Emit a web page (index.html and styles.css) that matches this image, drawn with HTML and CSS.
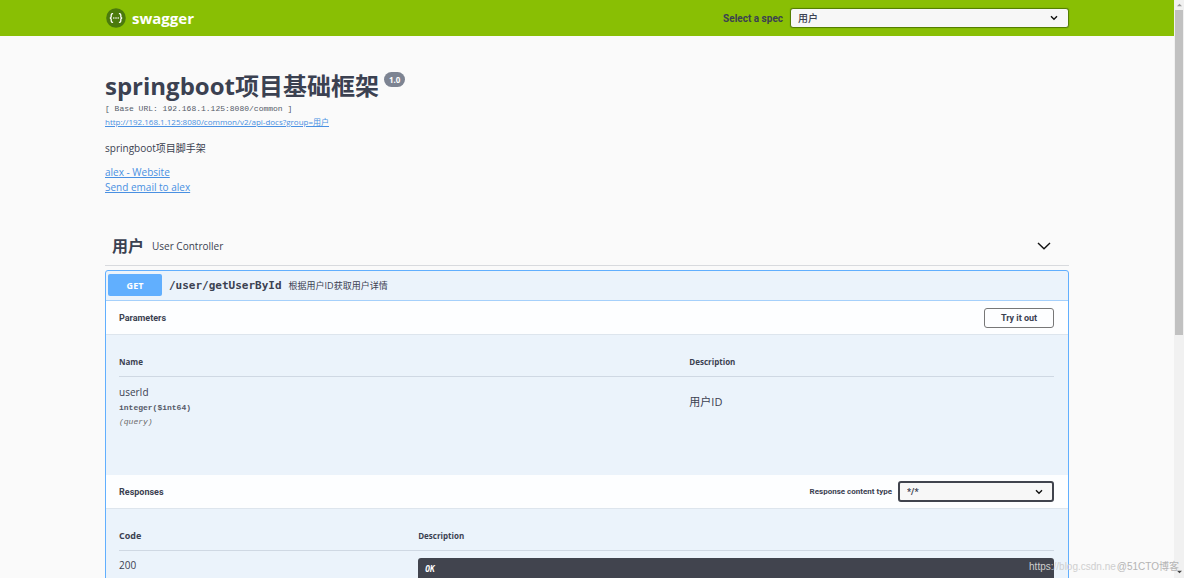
FILE: index.html
```html
<!DOCTYPE html>
<html lang="zh-CN">
<head>
<meta charset="utf-8">
<title>Swagger UI</title>
<link rel="stylesheet" href="styles.css">
</head>
<body>
<div class="page">
  <header class="topbar">
    <div class="wrapper topbar-row">
      <a class="logo" href="#">
        <svg class="logo-mark" viewBox="0 0 20 20" aria-hidden="true">
          <circle cx="10" cy="10" r="9.8" fill="#4b7a0c"/>
          <g fill="none" stroke="#fff" stroke-width="1.3">
            <path d="M7.1 5.6H6.6Q5.2 5.6 5.2 7V8.4Q5.2 10 3.8 10Q5.2 10 5.2 11.6V13Q5.2 14.4 6.6 14.4H7.1"/>
            <path d="M12.9 5.6H13.4Q14.8 5.6 14.8 7V8.4Q14.8 10 16.2 10Q14.8 10 14.8 11.6V13Q14.8 14.4 13.4 14.4H12.9"/>
          </g>
          <g fill="#fff"><circle cx="7.8" cy="10" r=".8"/><circle cx="10" cy="10" r=".8"/><circle cx="12.2" cy="10" r=".8"/></g>
        </svg>
        <span class="logo-text">swagger</span>
      </a>
      <div class="spec">
        <label class="spec-label" for="spec">Select a spec</label>
        <span class="select-box spec-box">
          <select class="select" id="spec"><option>用户</option></select>
          <svg class="select-arrow" viewBox="0 0 8 6" aria-hidden="true"><path d="M1 1.2 4 4.2 7 1.2"/></svg>
        </span>
      </div>
    </div>
  </header>
  <main class="wrapper">
    <section class="info">
      <h1 class="title">springboot项目基础框架<span class="version">1.0</span></h1>
      <div class="base-url">[ Base URL: 192.168.1.125:8080/common ]</div>
      <a class="link docs-link" href="#">http://192.168.1.125:8080/common/v2/api-docs?group=用户</a>
      <p class="description">springboot项目脚手架</p>
      <a class="link" href="#">alex - Website</a>
      <a class="link" href="#">Send email to alex</a>
    </section>
    <section>
      <div class="tag">
        <h2 class="tag-name">用户</h2>
        <span class="tag-text">User Controller</span>
        <button class="tag-toggle" type="button" aria-label="Collapse">
          <svg class="tag-arrow" viewBox="0 0 14 8" aria-hidden="true"><path d="M1 1 7 6.8 13 1"/></svg>
        </button>
      </div>
      <article class="op">
        <div class="op-summary">
          <button class="method" type="button">GET</button>
          <span class="path">/user/getUserById</span>
          <span class="op-text">根据用户ID获取用户详情</span>
        </div>
        <div class="bar">
          <h3 class="bar-title">Parameters</h3>
          <button class="try" type="button">Try it out</button>
        </div>
        <div class="panel params">
          <table class="table">
            <thead><tr><th class="param-name">Name</th><th>Description</th></tr></thead>
            <tbody><tr>
              <td>
                <div class="name">userId</div>
                <div class="type">integer($int64)</div>
                <div class="in">(query)</div>
              </td>
              <td class="param-text">用户ID</td>
            </tr></tbody>
          </table>
        </div>
        <div class="bar">
          <h3 class="bar-title">Responses</h3>
          <div class="content-type">
            <label class="type-label" for="type">Response content type</label>
            <span class="select-box type-box">
              <select class="select" id="type"><option>*/*</option></select>
              <svg class="select-arrow" viewBox="0 0 8 6" aria-hidden="true"><path d="M1 1.2 4 4.2 7 1.2"/></svg>
            </span>
          </div>
        </div>
        <div class="panel">
          <table class="table">
            <thead><tr><th class="code-head">Code</th><th>Description</th></tr></thead>
            <tbody><tr><td class="code">200</td><td><pre class="response">OK</pre></td></tr></tbody>
          </table>
        </div>
      </article>
    </section>
  </main>
</div>
<div class="scrollbar" aria-hidden="true">
  <svg class="scroll-arrow" viewBox="0 0 6 4"><path d="M0 3.5 3 .5 6 3.5Z" fill="#999"/></svg>
  <div class="thumb"></div>
  <svg class="scroll-arrow" viewBox="0 0 6 4"><path d="M0 .5 3 3.5 6 .5Z" fill="#444"/></svg>
</div>
<div class="marks"><span class="mark-url">https://blog.csdn.ne</span><span class="mark-site">@51CTO博客</span></div>
</body>
</html>
```

FILE: styles.css
```css
* { box-sizing: border-box; }

body {
  margin: 0;
  height: 100vh;
  display: flex;
  overflow: hidden;
  position: relative;
  background: #fafafa;
  color: #3b4151;
  font-family: "Open Sans", "Noto Sans CJK SC", sans-serif;
  font-size: 10px;
}

h1, h2, h3, p, pre { margin: 0; }
button, select { font: inherit; color: inherit; }

.page { flex: 1; min-width: 0; overflow: hidden; }
.wrapper { max-width: 964px; margin: 0 auto; }

.topbar { background: #89bf04; padding: 8px 0; }
.topbar-row { display: flex; justify-content: space-between; align-items: center; }
.logo { display: flex; align-items: center; gap: 6px; padding-left: 1px; color: #fff; text-decoration: none; }
.logo-mark { width: 20px; height: 20px; }
.logo-text { font-size: 15px; line-height: 20px; font-weight: 700; }
.spec { display: flex; align-items: center; gap: 7px; }
.spec-label { font-family: Roboto, sans-serif; font-size: 10px; font-weight: 700; }

.select-box { display: grid; align-items: center; }
.select {
  grid-area: 1 / 1;
  appearance: none;
  width: 100%;
  padding: 0 7px;
  border: 1px solid #41444e;
  border-radius: 3px;
  background: #f7f7f7;
  font-weight: 700;
}
.select-arrow {
  grid-area: 1 / 1;
  justify-self: end;
  width: 8px;
  height: 6px;
  margin-right: 11px;
  fill: none;
  stroke: #111;
  stroke-width: 1.4;
  pointer-events: none;
}
.spec-box { width: 279px; }
.spec-box .select { height: 20px; border-color: #547f00; box-shadow: 0 0 1px #547f00; font-weight: 500; }
.type-box { width: 156px; }
.type-box .select { height: 21px; border-width: 2px; font-family: Roboto, sans-serif; font-size: 9px; }

.info { display: flex; flex-direction: column; align-items: flex-start; padding: 33px 0 38px; }
.title { display: flex; align-items: flex-start; gap: 5px; font-size: 24px; line-height: 34px; }
.version {
  margin-top: 3px;
  padding: 0 5px;
  border-radius: 8px;
  background: #7d8492;
  color: #fff;
  font-size: 8px;
  line-height: 15px;
}
.base-url { font-family: "Liberation Mono", monospace; font-size: 8px; line-height: 12px; color: #555a68; }
.link { color: #4990e2; text-decoration: underline; line-height: 15px; }
.docs-link { font-size: 8px; line-height: 14px; }
.description { margin: 12px 0 10px; line-height: 14px; }

.tag { display: flex; align-items: center; gap: 8px; height: 33px; padding: 0 7px 6px; border-bottom: 1px solid #d8dade; }
.tag-name { font-size: 16px; line-height: 24px; }
.tag-toggle { margin-left: auto; padding: 0 11px; border: 0; background: none; display: flex; }
.tag-arrow { width: 14px; height: 8px; fill: none; stroke: #111; stroke-width: 1.4; }

.op { margin-top: 4px; border: 1px solid #61affe; border-radius: 3px; background: #ebf3fb; }
.op-summary { display: flex; align-items: center; gap: 7px; padding: 3px 2px 4px; border-bottom: 1px solid #a5d0fb; }
.method { width: 54px; height: 22px; padding: 0; border: 0; border-radius: 2px; background: #61affe; color: #fff; font-size: 9px; font-weight: 700; }
.path { font-family: "DejaVu Sans Mono", monospace; font-size: 11px; font-weight: 700; }
.op-text { font-size: 9px; }

.bar { display: flex; justify-content: space-between; align-items: center; height: 34px; padding: 0 14px 0 13px; background: #fdfeff; border-bottom: 1px solid #dde5ed; }
.bar-title { font-family: Roboto, sans-serif; font-size: 9px; }
.try { width: 70px; height: 20px; padding: 0; border: 1px solid #777; border-radius: 3px; background: transparent; font-family: Roboto, sans-serif; font-size: 9px; font-weight: 700; }
.content-type { display: flex; align-items: center; gap: 6px; }
.type-label { font-family: Roboto, sans-serif; font-size: 8px; font-weight: 700; }

.panel { padding: 14px 14px 14px 13px; }
.params { min-height: 140px; }
.table { width: 100%; border-collapse: collapse; table-layout: fixed; }
.table th { height: 27px; padding: 0 0 1px; border-bottom: 1px solid #cfd8e3; text-align: left; font-size: 8px; }
.table td { padding: 7px 0 0; vertical-align: top; }
.table .param-name { width: 61%; }
.table .code-head { width: 32%; font-size: 9px; }
.name { font-size: 10px; line-height: 16px; }
.type { font-family: "Liberation Mono", monospace; font-size: 8px; font-weight: 700; line-height: 16px; color: #555a68; }
.in { font-family: "Liberation Mono", monospace; font-size: 8px; font-style: italic; line-height: 12px; color: #6b6b6b; }
.table .param-text { padding-top: 17px; font-size: 11px; line-height: 16px; }
.code { line-height: 14px; }
.response { padding: 7px; border-radius: 3px; background: #41444e; color: #fff; font: italic 700 8px/10px "DejaVu Sans Mono", monospace; }

.scrollbar { width: 10px; display: flex; flex-direction: column; align-items: center; background: #f1f1f1; padding: 3px 0 4px; gap: 3px; }
.scroll-arrow { width: 5px; height: 4px; flex: none; }
.thumb { width: 8px; height: 57%; background: #c1c1c1; }
.thumb + .scroll-arrow { margin-top: auto; }

.marks {
  position: absolute;
  right: 5px;
  bottom: 4px;
  display: flex;
  align-items: baseline;
  gap: 1px;
  white-space: nowrap;
  font-family: "Liberation Sans", "Noto Sans CJK SC", sans-serif;
  font-size: 10px;
  line-height: 14px;
}
.mark-url { color: #cfcfcf; }
.mark-site { color: #b4b4b4; }
```
